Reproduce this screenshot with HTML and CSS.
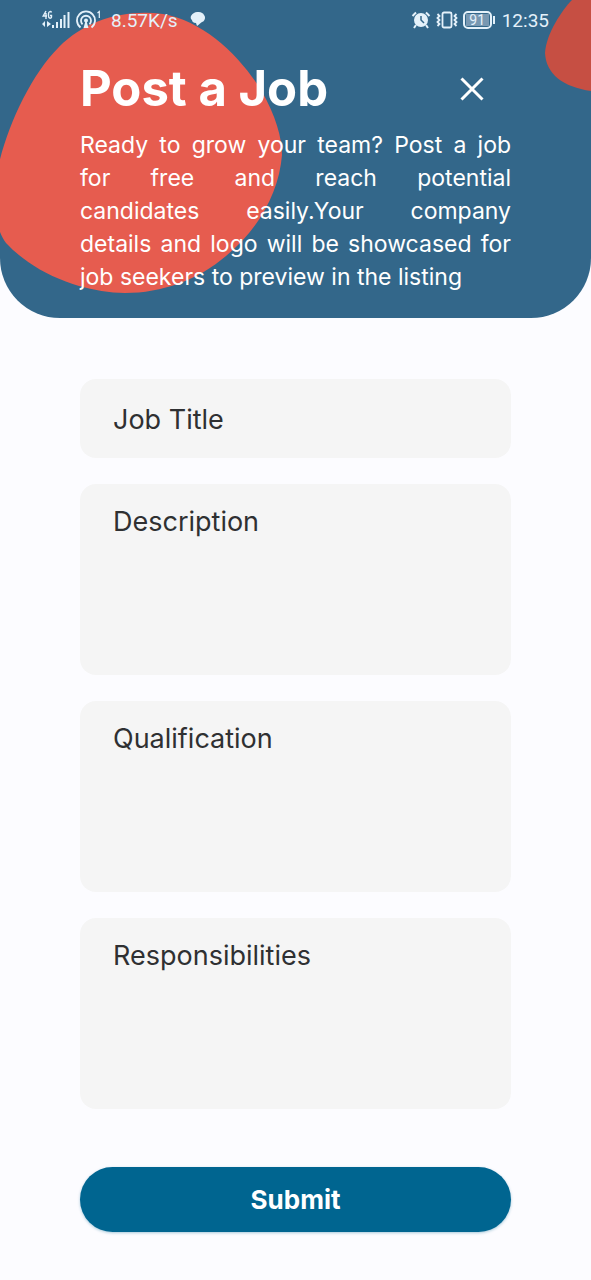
FILE: index.html
```html
<!DOCTYPE html>
<html lang="en">
<head>
<meta charset="utf-8">
<meta name="viewport" content="width=device-width, initial-scale=1">
<title>Post a Job</title>
<link rel="stylesheet" href="styles.css">
</head>
<body>
<header class="hero">
  <svg class="blob blob-main" width="283" height="294" viewBox="0 0 283 294" aria-hidden="true"><path d="M-6 194C-3 150 24 82 59 47C86 20 124 9 163 14C204 21 240 56 261 90C276 116 282 138 282 155C279 192 259 229 226 256C198 280 162 293 125 293C77 292 32 271 6 243C-3 231 -6 212 -6 194Z"/></svg>
  <svg class="blob blob-corner" width="46" height="92" viewBox="0 0 46 92" aria-hidden="true"><path d="M46 0H27C17 10 1 34 0 53C1 74 18 87 46 91Z"/></svg>
  <div class="status">
    <div class="status-group">
      <svg width="28" height="20" viewBox="0 0 28 20" aria-hidden="true"><g fill="none" stroke="currentColor" stroke-width="1.4"><path d="M4 1L1.200 6H5M4 3V9M9.500 2.500C9 1.200 6.500 1 6.500 4V6C6.500 9 9.500 8.500 9.500 7V5.500H8"/></g><path fill="currentColor" d="M3 11V17L0 14ZM5 11L9 14L5 17ZM10 15h2v3h-2zM14 12h2v6h-2zM18 9h2v9h-2zM21.500 5h2v13h-2zM25.500 2h2v16h-2z"/></svg>
      <svg class="hotspot" width="25" height="20" viewBox="0 0 25 20" aria-hidden="true"><g fill="none" stroke="currentColor" stroke-width="1.800"><path d="M4.500 17.500A9 9 0 1 1 15.500 17.500M6.500 14.300A5 5 0 1 1 13.500 14.300"/><path stroke-width="1.200" d="M21.500 3L23.300 1.500V8"/></g><circle cx="10" cy="10.500" r="2" fill="currentColor"/><path fill="currentColor" d="M9.500 11h1l2 7h-5z"/></svg>
      <span class="speed">8.57K/s</span>
      <svg class="chat" width="16" height="16" viewBox="0 0 16 16" aria-hidden="true"><path fill="currentColor" d="M4 1C7 -1 13 0 14 3C16 5 15 9 12 10C10 11 9 13 7 14L6 11C3 11 2 9 2 8C0 7 0 3 4 1Z"/></svg>
    </div>
    <div class="status-group">
      <svg width="20" height="18" viewBox="0 0 20 18" aria-hidden="true"><circle cx="10" cy="9" r="7" fill="currentColor"/><path d="M1.500 5L5 1.500M15 1.500L18.500 5M5 14L3 17M15 14L17 17" stroke="currentColor" stroke-width="2"/><path d="M10 5V9L13 12" fill="none" stroke="#33678a" stroke-width="1.500"/></svg>
      <svg class="vibrate" width="22" height="18" viewBox="0 0 22 18" fill="none" stroke="currentColor" stroke-width="1.800" aria-hidden="true"><rect x="6.500" y="1.500" width="9" height="15" rx="1.500"/><path d="M1.500 3L3.500 5L1.500 7L3.500 9L1.500 11L3.500 13L1.500 15M20.500 3L18.500 5L20.500 7L18.500 9L20.500 11L18.500 13L20.500 15"/></svg>
      <span class="battery"><span class="battery-level">91</span></span>
      <span class="clock">12:35</span>
    </div>
  </div>
  <div class="hero-body">
    <div class="title-row">
      <h1>Post a Job</h1>
      <button class="close" type="button" aria-label="Close"><svg width="24" height="24" viewBox="0 0 24 24" aria-hidden="true"><path d="M1.500 1.500L22.500 22.500M22.500 1.500L1.500 22.500" stroke="currentColor" stroke-width="3"/></svg></button>
    </div>
    <p class="intro">
      <span class="line">Ready to grow your team? Post a job</span>
      <span class="line">for free and reach potential</span>
      <span class="line">candidates easily.Your company</span>
      <span class="line">details and logo will be showcased for</span>
      <span class="line line-last">job seekers to preview in the listing</span>
    </p>
  </div>
</header>
<main>
  <form class="form">
    <input class="field" type="text" placeholder="Job Title" aria-label="Job Title">
    <textarea class="field field-tall" placeholder="Description" aria-label="Description"></textarea>
    <textarea class="field field-tall" placeholder="Qualification" aria-label="Qualification"></textarea>
    <textarea class="field field-tall" placeholder="Responsibilities" aria-label="Responsibilities"></textarea>
    <button class="submit" type="submit">Submit</button>
  </form>
</main>
</body>
</html>
```
FILE: styles.css
```css
* { box-sizing: border-box; }
body {
  margin: 0;
  background: #fcfcff;
  color: #2f3032;
  font-family: Inter, "Liberation Sans", sans-serif;
}
.hero {
  position: relative;
  overflow: hidden;
  padding-bottom: 24px;
  border-radius: 0 0 60px 60px;
  background: #33678a;
  color: #fff;
}
.blob { position: absolute; top: 0; }
.blob-main { left: 0; fill: #e65c4f; }
.blob-corner { right: 0; fill: #c64f43; }
.status {
  position: relative;
  display: flex;
  justify-content: space-between;
  height: 40px;
  padding: 0 42px;
  color: #e4f1fa;
  font-family: Roboto, sans-serif;
  font-size: 19px;
}
.status-group { display: flex; align-items: center; }
.status svg { display: block; }
.hotspot { margin-left: 6px; }
.speed { margin-left: 10px; }
.chat { margin-left: 12px; }
.vibrate { margin-left: 5px; }
.battery {
  position: relative;
  width: 29px;
  height: 18px;
  margin: 0 10px 0 5px;
  padding: 1px;
  border: 2px solid currentColor;
  border-radius: 5px;
}
.battery::after {
  content: "";
  position: absolute;
  top: 3px;
  right: -5px;
  width: 2px;
  height: 8px;
  background: currentColor;
}
.battery-level {
  display: block;
  background: #7898b2;
  font-size: 14px;
  line-height: 12px;
  text-align: center;
}
.hero-body { position: relative; padding: 18px 80px 0; }
.title-row {
  display: flex;
  align-items: center;
  justify-content: space-between;
  padding-right: 27px;
}
h1 { margin: 0; font-size: 49px; line-height: 62px; font-weight: 700; }
.close {
  display: flex;
  padding: 0;
  border: 0;
  background: none;
  color: inherit;
  cursor: pointer;
}
.intro { margin: 9px 0 0; font-size: 23px; line-height: 33px; }
.line { display: block; text-align-last: justify; white-space: nowrap; }
.line-last { text-align-last: left; }
.form { display: flex; flex-direction: column; gap: 26px; padding: 61px 80px 48px; }
.field {
  display: block;
  width: 100%;
  height: 79px;
  padding: 22px 33px 20px;
  border: 0;
  border-radius: 16px;
  outline: 0;
  background: #f5f5f5;
  color: inherit;
  font: 27px/33px Inter, "Liberation Sans", sans-serif;
  resize: none;
}
.field-tall { height: 191px; padding-top: 21px; }
.field::placeholder { color: #2f3032; opacity: 1; }
.submit {
  height: 65px;
  margin-top: 32px;
  border: 0;
  border-radius: 33px;
  background: #006590;
  box-shadow: 0 1px 3px #00659055;
  color: #fff;
  font: 700 26px/33px Inter, "Liberation Sans", sans-serif;
  cursor: pointer;
}
```
